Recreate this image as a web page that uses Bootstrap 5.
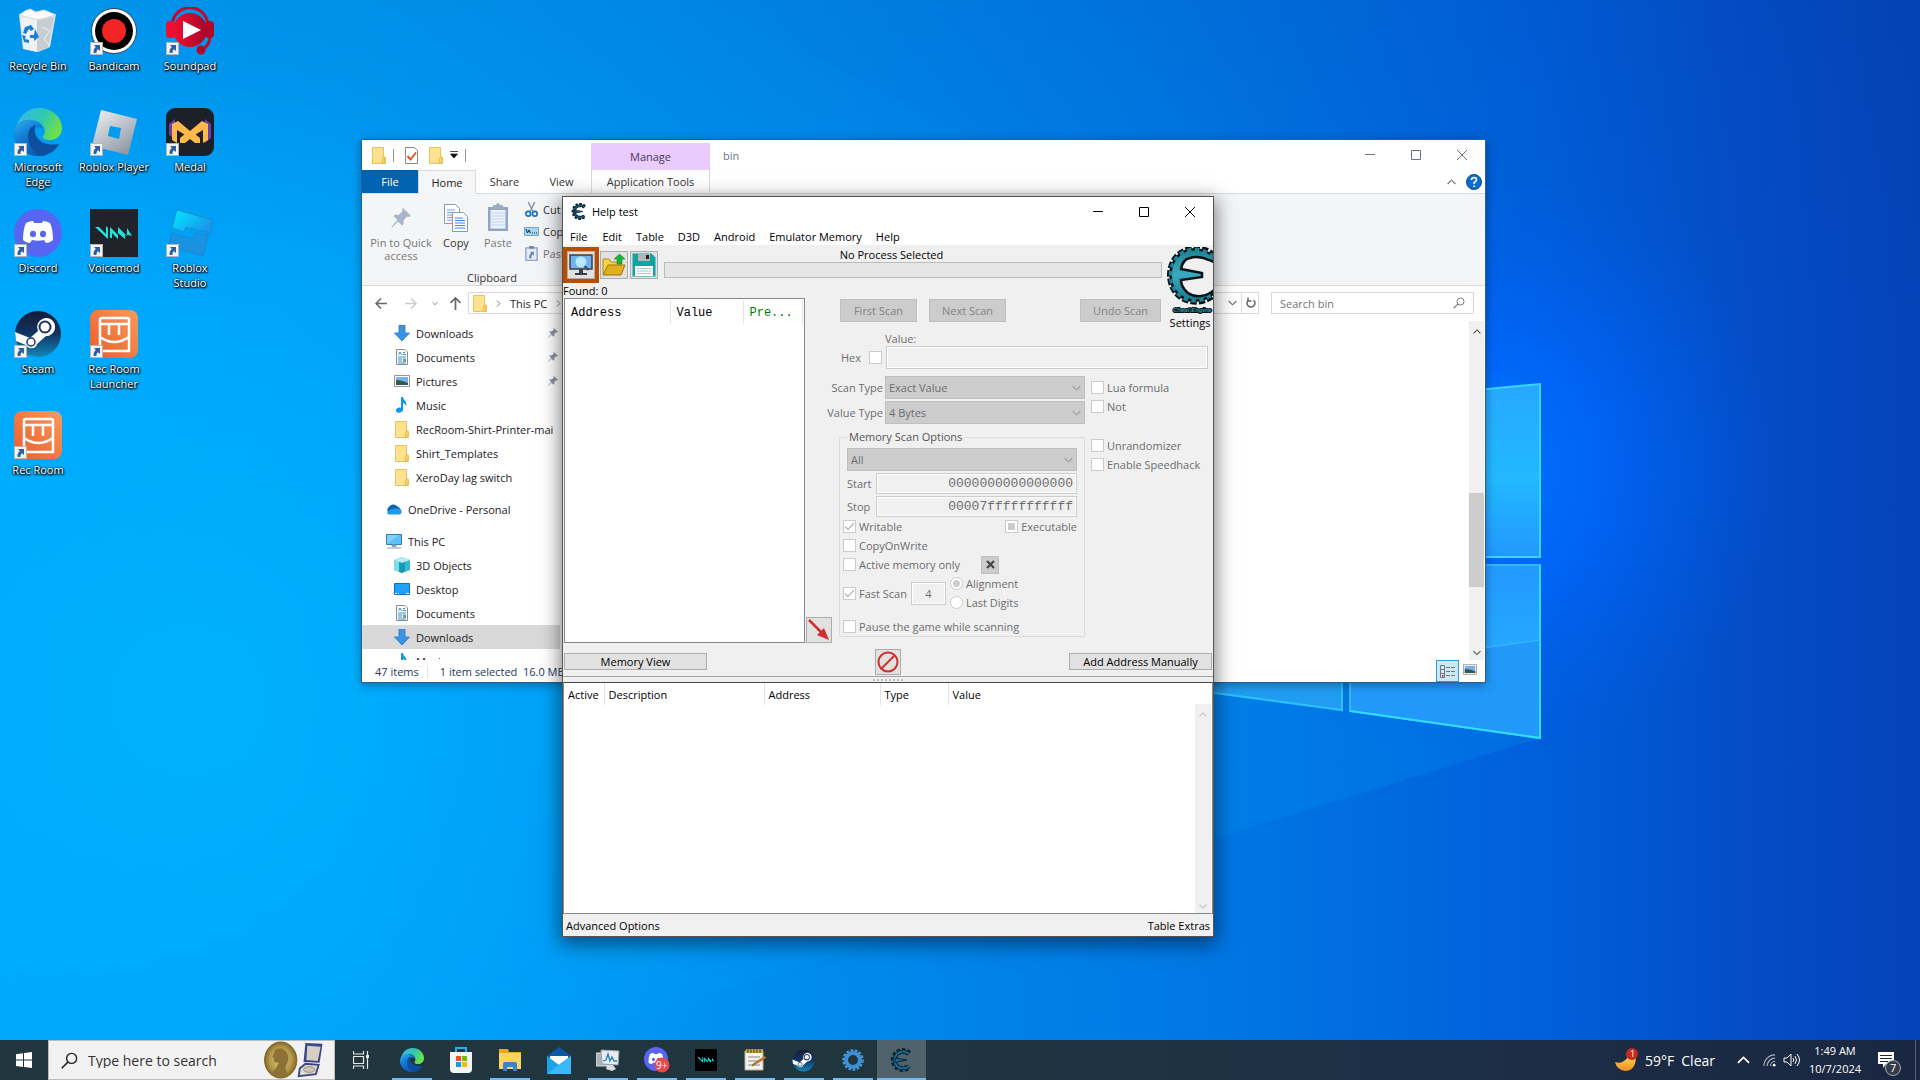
<!DOCTYPE html>
<html lang="en">
<head>
<meta charset="utf-8">
<meta name="viewport" content="width=device-width, initial-scale=1">
<title>Desktop</title>
<link rel="stylesheet" href="https://cdn.jsdelivr.net/npm/bootstrap@5.3.0/dist/css/bootstrap.min.css">
<style>
body{font-family:"Open Sans","Noto Sans",sans-serif;font-size:11px;line-height:15px;color:#000;background:#008ff0}
button,input,select{font:inherit;color:inherit;border-radius:0}
a{color:inherit;text-decoration:none}
svg{display:block;flex:none}
.desk{position:relative;flex:1 1 auto;min-height:0;overflow:hidden}
.wallpaper{position:absolute;inset:0;width:100%;height:100%}
/* desktop shortcuts */
.shortcuts{position:relative;display:inline-grid;grid-template-columns:repeat(3,76px);grid-auto-rows:101px;padding-top:7px}
.shortcut{display:flex;flex-direction:column;align-items:center;text-align:center;color:#fff;text-shadow:1px 1px 2px #000,0 1px 2px #000,0 0 2px #000}
.shortcut span{margin-top:3px;padding:0 2px}
.nolabel{white-space:nowrap}
.flip{transform:rotate(180deg)}
.turn{transform:rotate(-90deg)}
/* windows */
.win{position:absolute;background:#fff}
.explorer{left:361px;top:139px;width:1125px;height:544px;border:1px solid #2b5f8f;border-top-color:#0b66b4;box-shadow:0 2px 9px rgba(0,0,0,.35)}
.explorer>*{flex:none}
.explorer>.ex-body{flex:1 1 0;min-height:0}
.engine{left:562px;top:196px;width:652px;border:1px solid #555;box-shadow:0 5px 18px 2px rgba(0,0,0,.5)}
.capbtn{background:none;border:0;padding:0;width:46px;display:flex;align-items:center;justify-content:center}
/* explorer */
.ex-title{height:30px}
.quick{width:229px;gap:7px;padding-left:10px}
.ctx-tab{width:119px;margin-top:3px;background:#e9cbfd;color:#4a3b57;display:flex;align-items:center;justify-content:center}
.vbar{width:1px;height:13px;background:#999}
.ex-tabs{height:24px;border-bottom:1px solid #dadbdc}
.ex-tab{display:flex;align-items:center;justify-content:center;width:57px;color:#333}
.ex-file{width:56px;background:#0063b1;color:#fff}
.ex-home{width:58px;background:#f5f6f7;border:1px solid #dadbdc;border-bottom:0;margin-bottom:-1px;color:#222}
.ex-app{width:119px;margin-left:1px;border:solid #dadbdc;border-width:0 1px;color:#333}
.ribbon{height:92px;background:#f4f5f7;border-bottom:1px solid #dadbdc;color:#333}
.rib-btn{background:none;border:0;padding:0;display:flex;flex-direction:column;align-items:center;line-height:13px}
.rib-small{gap:7px;padding-top:8px}
.muted-t{color:#777}
.addr-row{height:35px;padding:6px 11px 7px 0}
.field-box{border:1px solid #d9d9d9;height:22px}
.nav-pane{width:198px;overflow:hidden;white-space:nowrap}
.nav-pane a{display:flex;align-items:center;height:24px;gap:6px;padding-left:32px;color:#1a1a1a}
.nav-pane a.lvl0{padding-left:24px}
.nav-pane a.sel{background:#d9d9d9}
.pinned svg:last-child{margin-left:auto;margin-right:2px}
.sbar{background:#f0f0f0;display:flex;flex-direction:column;align-items:center}
.status-ex{height:22px;color:#1e395b}
.view-on{background:#cce8f6;border:1px solid #26a0da;padding:0 3px}
/* engine */
.eng-title{height:30px;padding-bottom:1px}
.eng-menu{height:18px}
.eng-menu a{padding:0 0 0 7px;margin-right:7px}
.eng-menu a:first-child{margin-right:8px}
.eng-top{background:#f0f0f0;display:grid;grid-template-columns:269px 1fr 50px;grid-template-rows:38px 50px 312px 31px}
.tool{width:28px;height:28px;padding:0;border:1px solid #adadad;background:#e1e1e1;display:flex;align-items:center;justify-content:center}
.hot{outline:4px solid #b84c00}
.progress-box{height:16px;border:1px solid #bcbcbc;background:#e6e6e6}
.found-list{width:241px;height:345px;border:1px solid #828790;background:#fff;margin-left:1px}
.mono-h{font-family:"Liberation Mono",monospace;font-size:12px}
.mono-h th{font-weight:400;height:24px;padding:2px 6px 0;border-right:1px solid #e5e5e5}
.flat{border:1px solid #bfbfbf;background:#ccc;color:#838383;height:23px;padding:0}
.cmd{border:1px solid #adadad;background:#e1e1e1;width:143px;height:17px;padding:0;line-height:14px}
.dis{color:#6d6d6d}
.dis select{appearance:none;display:block;border:1px solid #bfbfbf;background:#ccc;height:23px;padding:0 3px;color:#6d6d6d;opacity:1;width:100%}
.pick{position:relative}
.pick svg{position:absolute;right:4px;top:9px;pointer-events:none}
.tbox{border:1px solid #ccc;box-shadow:inset 0 0 0 1px #fff;background:#f0f0f0;padding:0 4px;color:#6d6d6d}
.side-lab{width:51px;margin-right:2px;white-space:nowrap;display:flex;justify-content:flex-end}
.span-row{display:flex;align-items:center;height:21px;margin-top:2px}
.span-row label{width:29px}
.hexnum{font-family:"Liberation Mono",monospace;font-size:13px;height:21px;text-align:right;padding:0 3px;min-width:0}
.tick{appearance:none;flex:none;width:13px;height:13px;border:1px solid #ccc;background:#fff center/11px 11px no-repeat;margin:0}
.tick:checked{background-image:url("data:image/svg+xml,%3Csvg xmlns='http://www.w3.org/2000/svg' viewBox='0 0 11 11'%3E%3Cpath d='M1 5.5l3 3 6-6.5' fill='none' stroke='%23bbb' stroke-width='1.3'/%3E%3C/svg%3E")}
.tick.part{background-image:linear-gradient(#ccc,#ccc);background-size:7px 7px}
.dot{border-radius:50%}
.dot:checked{background-image:radial-gradient(circle,#ccc 0 3px,#fff 4px)}
.ln{display:flex;align-items:center;height:19px;gap:3px}
.group{margin:5px 0 0 7px;border:1px solid #dcdcdc;padding:3px 7px 0}
.group legend{float:none;width:auto;font-size:11px;line-height:16px;margin:0;padding:0 2px;height:16px;color:#555}
.splitter{height:6px;border-top:1px solid #a0a0a0;background:#f0f0f0;display:flex;align-items:center;justify-content:center}
.splitter i{width:30px;height:2px;background:repeating-linear-gradient(90deg,#bbb 0 2px,transparent 2px 4px)}
.cheat-list{height:232px;border:1px solid #828790;border-top-color:#444;background:#fff}
.cheat-list th{font-weight:400;height:22px;padding:0 0 0 4px;border-right:1px solid #e5e5e5}
.cheat-list th:last-child{border:0}
.eng-status{height:22px;background:#f0f0f0;padding:1px 3px 0}
/* taskbar */
.taskbar{height:40px;background:linear-gradient(90deg,#21353f,#20363f 45%,#1d3045 70%,#1a2742);color:#fff;flex:none;display:flex}
.start{width:48px;background:none;border:0;padding:0;display:flex;align-items:center;justify-content:center}
.findbox{width:287px;background:#f2f2f2;border:1px solid #bbb;color:#333}
.findbox input{border:0;background:none;width:140px;font-size:14px;padding:0;outline:0}
.findbox input::placeholder{color:#333;opacity:1}
.tb{width:49px;display:flex;align-items:center;justify-content:center;background:none;border:0;padding:0}
.run{background:linear-gradient(#76b9ed,#76b9ed) center bottom/40px 2px no-repeat}
.act{background:linear-gradient(#76b9ed,#76b9ed) center bottom/49px 2px no-repeat,#50636c}
.tray{font-size:14px}
.clock{font-size:11px;line-height:18px;width:64px;text-align:center}
</style>
<script src="https://cdn.jsdelivr.net/npm/bootstrap@5.3.0/dist/js/bootstrap.bundle.min.js"></script>
</head>
<body class="vh-100 d-flex flex-column overflow-hidden">

<svg width="0" height="0" class="position-absolute" aria-hidden="true">
<defs>
<linearGradient id="gEdgeA" x1="0" y1="0" x2="1" y2=".4"><stop offset="0" stop-color="#37b6f0"/><stop offset=".6" stop-color="#2fc8b0"/><stop offset="1" stop-color="#6be04c"/></linearGradient>
<linearGradient id="gEdgeB" x1="0" y1="0" x2=".6" y2="1"><stop offset="0" stop-color="#2fb0ee"/><stop offset=".5" stop-color="#0f78d4"/><stop offset="1" stop-color="#0a5cb0"/></linearGradient>
<linearGradient id="gRed" x1="0" y1="0" x2="1" y2="0"><stop offset="0" stop-color="#f01030"/><stop offset="1" stop-color="#a8062a"/></linearGradient>
<linearGradient id="gSilver" x1="0" y1="0" x2=".7" y2="1"><stop offset="0" stop-color="#f4f4f4"/><stop offset="1" stop-color="#8e99a6"/></linearGradient>
<linearGradient id="gRec" x1="1" y1="0" x2="0" y2="1"><stop offset="0" stop-color="#f79b5c"/><stop offset="1" stop-color="#ea5c2b"/></linearGradient>
<linearGradient id="gSteam" x1="0" y1="0" x2="0" y2="1"><stop offset="0" stop-color="#141a38"/><stop offset=".5" stop-color="#123564"/><stop offset="1" stop-color="#1287b8"/></linearGradient>
<linearGradient id="gStudio" x1="0" y1="0" x2="1" y2=".6"><stop offset="0" stop-color="#00eaff"/><stop offset="1" stop-color="#1a96ea"/></linearGradient>
<linearGradient id="gTeal" x1="0" y1="0" x2="0" y2="1"><stop offset="0" stop-color="#1f8496"/><stop offset=".5" stop-color="#3aaabe"/><stop offset="1" stop-color="#1b7a90"/></linearGradient>
<linearGradient id="gMoon" x1="0" y1="0" x2="0" y2="1"><stop offset="0" stop-color="#ffd34d"/><stop offset="1" stop-color="#f08a24"/></linearGradient>
<radialGradient id="gGold"><stop offset="0" stop-color="#e0c878"/><stop offset=".7" stop-color="#b3974a"/><stop offset="1" stop-color="#80672a"/></radialGradient>
<symbol id="arrowov" viewBox="0 0 13 13"><rect x=".5" y=".5" width="12" height="12" fill="#f4f4f4" stroke="#b5b5b5"/><path d="M4 3h6v6L8 7.200C6.800 8 6.300 9.500 6.500 11H3.800C3 8.700 4 6.800 5.800 5Z" fill="#2e5fa3"/></symbol>
<symbol id="edge" viewBox="0 0 48 48"><path d="M2 20C5 7 14 0 25 0c14 0 23 10 23 20 0 8-6 12-12 12-4 0-8-1-7-4 3-3 2-7 0-10C24 10 10 10 2 20Z" fill="url(#gEdgeA)"/><path d="M0 26C0 14 10 11 17 12c6 1 11 5 12 9-5-4-11-1-12 6-1 8 5 17 15 20-3 1-6 1-8 1C11 48 0 38 0 26Z" fill="url(#gEdgeB)"/><path d="M14 28c0-6 3-10 8-11-3 5-1 13 6 17 6 3 12 3 17 2-3 6-10 11-17 12C19 46 14 36 14 28Z" fill="#0d4f9e"/></symbol>
<symbol id="discord" viewBox="0 0 48 48"><circle cx="24" cy="24" r="24" fill="#5865f2"/><path d="M19 12c-3 0-5 1-7 2-2 4-3 10-3 17 2 2 5 3 7 3l2-3c4 1 8 1 12 0l2 3c2 0 5-1 7-3 0-7-1-13-3-17-2-1-4-2-7-2l-1 2h-8Z" fill="#fff"/><ellipse cx="19" cy="25" rx="3" ry="3.300" fill="#5865f2"/><ellipse cx="29" cy="25" rx="3" ry="3.300" fill="#5865f2"/></symbol>
<symbol id="vm" viewBox="0 0 48 48"><path d="M5 18h4l7 7V17l2 2v11ZM20 18l8 8v-8l9 9v-8l5 8-7-2v5l-7-6v6l-6-6v5h-2Z" fill="#1fe5dc"/></symbol>
<symbol id="steam" viewBox="0 0 48 48"><circle cx="24" cy="24" r="23" fill="url(#gSteam)"/><path d="M1 22l15 6 8-7a9 9 0 1 1 8 5l-9 8c-1 5-8 6-11 1L2 31Z" fill="#fff"/><circle cx="31" cy="17" r="6.500" fill="#1a3460"/><circle cx="31" cy="17" r="4.500" fill="#fff"/><circle cx="17" cy="32" r="4" fill="none" stroke="#1a3460" stroke-width="1.500"/></symbol>
<symbol id="rec" viewBox="0 0 48 48"><rect width="48" height="48" rx="8" fill="url(#gRec)"/><g fill="none" stroke="#fff" stroke-width="2.500"><path d="M12 8h25q2 0 2 2v4H10v-4q0-2 2-2ZM10 14v27h29V14M19 15v10M29 15v10M10 27q14 10 29 0"/></g></symbol>
<symbol id="folder" viewBox="0 0 14 17"><path d="M.5.500h11V10h1.800v6.500H.5Z" fill="#ffe290" stroke="#e9c35a"/><path d="M10.500 16V11q1-1.500 2.500 0v5.500Z" fill="#ffd766" stroke="#dcae3e" stroke-width=".7"/></symbol>
<symbol id="down" viewBox="0 0 16 16"><path d="M5 0h6v8h4.500L8 16 .5 8H5Z" fill="#3a94e4" stroke="#2676c6" stroke-width=".8"/></symbol>
<symbol id="doc" viewBox="0 0 16 16"><path d="M2.500.500H11L13.500 3v12.500h-11Z" fill="#fff" stroke="#8d8d8d"/><path d="M4.500 6l1.500-3 1.500 3M9 3.500h2M9 5.500h3M4 8h8M4 10h4M4 12h4M4 14h8" stroke="#3a8ed0" fill="none"/><path d="M9 9.500h3V13H9Z" fill="#69a59a"/></symbol>
<symbol id="pic" viewBox="0 0 16 12"><path d="M.5.500h15v11H.5Z" fill="#fff" stroke="#969696"/><path d="M2 2h12v8H2Z" fill="#76b2ea"/><path d="M2 5q5 0 12 3v2H2Z" fill="#35584f"/></symbol>
<symbol id="note" viewBox="0 0 16 16"><path d="M7 0h2c0 3 4 4 3.500 9-1-2-2-2.500-3.500-3v7c-.5 3-7 4-7 .500C2 11 5 10 7 11Z" fill="#0f95ee"/></symbol>
<symbol id="cloud" viewBox="0 0 16 12"><path d="M3 10A3.500 3.500 0 0 1 3 4 5 5 0 0 1 11 3Q15 5 15.500 9Z" fill="#0a64b8"/><path d="M1 10q2-4 6-4 4-2 8 1 1.500 4-1.500 4.500H3Q1.500 11 1 10Z" fill="#2199e8"/></symbol>
<symbol id="pc" viewBox="0 0 16 15"><path d="M.5.500h15v10H.5Z" fill="#5cc0fa" stroke="#2d7fb8"/><path d="M1 10V1h12Z" fill="#9adcff" opacity=".6"/><path d="M6 11h4v1.500H6ZM1 14h14" fill="#9ab" stroke="#8c9aa6"/></symbol>
<symbol id="cube" viewBox="0 0 16 16"><path d="M8 0l8 3v10l-8 3-8-3V3Z" fill="#35b8cf"/><path d="M0 3l8 3v10l-8-3Z" fill="#7fdce8"/><path d="M8 0l8 3-8 3-8-3Z" fill="#b4eef4"/><path d="M5 5l3 1 3-1v9l-3 2-3-1Z" fill="#159ab8"/></symbol>
<symbol id="dtop" viewBox="0 0 16 12"><path d="M.5.500h15v11H.5Z" fill="#1fa0ff" stroke="#0a6fc8"/><path d="M1 10.500h2M4 10.500h1M12 10.500h3" stroke="#fff"/></symbol>
<symbol id="pin" viewBox="0 0 20 20"><path d="M12 0l8 8-2 1-2-.500-3.500 4 .2 3.500-1.700 1.500-4-4L1 19.500.3 19l6-7L2.500 8 4 6.500l3.500.500 4-3.500-.500-2Z" fill="currentColor"/></symbol>
<symbol id="ce" viewBox="0 0 24 24"><path d="M19 5.500A9 9 0 1 0 19 18.500" fill="none" stroke="#0c2430" stroke-width="6" stroke-dasharray="3 1.600"/><path d="M19 6A8.500 8.500 0 1 0 19 18" fill="none" stroke="#0c2430" stroke-width="3.600"/><path d="M19 6A8.500 8.500 0 1 0 19 18" fill="none" stroke="currentColor" stroke-width="2"/><path d="M5 10l12 2-12 2.500Z" fill="currentColor" stroke="#0c2430" stroke-width="1"/></symbol>
<symbol id="chev" viewBox="0 0 10 6"><path d="M.7.800L5 5 9.300.800" fill="none" stroke="currentColor" stroke-width="1.300"/></symbol>
<symbol id="lens" viewBox="0 0 16 16"><circle cx="10" cy="6" r="4.700" fill="none" stroke="currentColor" stroke-width="1.300"/><path d="M6.700 9.300L.7 15.300" stroke="currentColor" stroke-width="1.500"/></symbol>
<symbol id="close" viewBox="0 0 10 10"><path d="M0 0l10 10M10 0L0 10" stroke="currentColor"/></symbol>
<symbol id="maxi" viewBox="0 0 10 10"><path d="M.5.500h9v9h-9Z" fill="none" stroke="currentColor"/></symbol>
<symbol id="mini" viewBox="0 0 10 10"><path d="M0 4.500h10" stroke="currentColor"/></symbol>
</defs>
</svg>

<main class="desk">
<svg class="wallpaper" viewBox="0 0 1920 1040" preserveAspectRatio="none" aria-hidden="true">
<defs>
<linearGradient id="wBase" x1="0" y1="0" x2="1" y2="0"><stop offset="0" stop-color="#00a6fb"/><stop offset=".2" stop-color="#009ef6"/><stop offset=".4" stop-color="#008eed"/><stop offset=".62" stop-color="#0078e4"/><stop offset=".8" stop-color="#0060dc"/><stop offset=".9" stop-color="#044ec8"/><stop offset="1" stop-color="#0542b8"/></linearGradient>
<linearGradient id="wTop" x1="0" y1="0" x2="0" y2="1"><stop offset="0" stop-color="#003fa0" stop-opacity=".16"/><stop offset=".3" stop-color="#003fa0" stop-opacity="0"/></linearGradient>
<radialGradient id="wLeft" gradientUnits="userSpaceOnUse" cx="200" cy="700" r="620"><stop offset="0" stop-color="#00b4ff" stop-opacity=".9"/><stop offset="1" stop-color="#00b0ff" stop-opacity="0"/></radialGradient>
<radialGradient id="wGlow" gradientUnits="userSpaceOnUse" cx="1480" cy="470" r="300"><stop offset="0" stop-color="#0074ff"/><stop offset=".4" stop-color="#0066ff" stop-opacity=".75"/><stop offset="1" stop-color="#0058e8" stop-opacity="0"/></radialGradient>
<linearGradient id="wBeam" gradientUnits="userSpaceOnUse" x1="1540" y1="0" x2="300" y2="0"><stop offset="0" stop-color="#0088ec" stop-opacity=".3"/><stop offset=".5" stop-color="#0096f4" stop-opacity=".3"/><stop offset="1" stop-color="#00a0ff" stop-opacity=".05"/></linearGradient>
<linearGradient id="wPane" x1="0" y1="0" x2="0" y2="1"><stop offset="0" stop-color="#27a8ff"/><stop offset=".55" stop-color="#22b8ff"/><stop offset="1" stop-color="#2298ff"/></linearGradient>
<linearGradient id="wPane2" x1="0" y1="0" x2="0" y2="1"><stop offset="0" stop-color="#2298ff"/><stop offset="1" stop-color="#26acff"/></linearGradient>
</defs>
<rect width="1920" height="1040" fill="url(#wBase)"/>
<rect width="1920" height="1040" fill="url(#wTop)"/>
<rect width="1920" height="1040" fill="url(#wLeft)"/>
<rect width="1920" height="1040" fill="url(#wGlow)"/>
<path d="M1540 738L560 1040H0V560L1100 560Z" fill="url(#wBeam)"/>
<path d="M1540 384L1350 330 700 0H320L1000 500Z" fill="url(#wBeam)" opacity=".3"/>
<path d="M1200 412L1540 384V557H1200Z" fill="url(#wPane)"/>
<path d="M1350 565H1540V738L1350 711Z" fill="#2298f8"/>
<path d="M1350 565H1540V640L1350 667Z" fill="url(#wPane2)"/>
<path d="M1100 565H1342V710L1100 679Z" fill="#209cf2"/>
<path d="M1350 667L1540 640" stroke="#3cc4ff" stroke-opacity=".8"/>
<path d="M1200 417L1540 384V557H1200" fill="none" stroke="#37d6ff" stroke-width="2"/>
<path d="M1350 565V711L1540 738V565Z" fill="none" stroke="#30b8ff" stroke-width="2"/>
<path d="M1350 711L1540 738V565" fill="none" stroke="#30dcff" stroke-width="2"/>
<path d="M1342 683V710L1200 691" fill="none" stroke="#2cc0ff" stroke-width="2"/>
<path d="M1343 565H1349V711L1343 710Z" fill="#0078de"/>
</svg>

<div class="shortcuts">
<a class="shortcut" href="#"><svg width="48" height="48" viewBox="0 0 48 48"><path d="M5 8l37-1-6 33-12 5-15-3Z" fill="#dfe6ea"/><path d="M7 10l16 3v32L10 42Z" fill="#eef2f4"/><path d="M23 13l17-3-6 31-11 4Z" fill="#c6ced4"/><path d="M10 14l6 8-4 10 8 8M28 20l8 4-6 8 5 6" fill="none" stroke="#fff" stroke-opacity=".7"/><path d="M5 8L11 4 16 2 22 5 30 3 35 5 42 8 24 13Z" fill="#fafafa" stroke="#d4d8da"/><path d="M11 20l6-2 3 4-3 2-2-2-3 5-3-1ZM21 22l4 8-5 4v-3h-4v-3h4ZM8 28l4 1-1 3 4 1v3l-5-1Z" fill="#1a7fd6"/></svg><span>Recycle Bin</span></a>
<a class="shortcut" href="#"><svg width="48" height="48" viewBox="0 0 48 48"><circle cx="24" cy="24" r="22.500" fill="#fff" stroke="#345"/><circle cx="24" cy="24" r="19" fill="#000"/><circle cx="24" cy="24" r="12" fill="#f32424"/><use href="#arrowov" y="35" width="13" height="13"/></svg><span>Bandicam</span></a>
<a class="shortcut" href="#"><svg width="48" height="48" viewBox="0 0 48 48"><path d="M6 18C8 -5 40 -5 42 18M44 29q0 9-8 14" fill="none" stroke="#c00a2c" stroke-width="3"/><circle cx="24" cy="23" r="17" fill="url(#gRed)"/><rect y="14" width="9" height="17" rx="4" fill="#ee0f30"/><rect x="39" y="14" width="9" height="17" rx="4" fill="#b0072b"/><circle cx="35" cy="43" r="4.500" fill="#b0072b"/><path d="M17 14l18 9-18 9Z" fill="#fff"/><use href="#arrowov" y="35" width="13" height="13"/></svg><span>Soundpad</span></a>
<a class="shortcut" href="#"><svg width="48" height="48" viewBox="0 0 48 48"><use href="#edge"/><use href="#arrowov" y="35" width="13" height="13"/></svg><span>Microsoft Edge</span></a>
<a class="shortcut" href="#"><svg width="48" height="48" viewBox="0 0 48 48"><path d="M11 2l36 9-9 36L2 38ZM20 18l-2 10 11 3 2-11Z" fill="url(#gSilver)" fill-rule="evenodd"/><use href="#arrowov" y="35" width="13" height="13"/></svg><span class="nolabel">Roblox Player</span></a>
<a class="shortcut" href="#"><svg width="48" height="48" viewBox="0 0 48 48"><rect width="48" height="48" rx="9" fill="#1c2029"/><path d="M3 16l6-5v20l-6-4ZM45 16l-6-5v24l6-5Z" fill="#6b3fa8"/><path d="M6 16l6-3 12 10 12-10 6 3v16l-5 3V22l-5 3-8 5-8-5-5-3v13l-5-3ZM14 35v-5l5-4 5 4 5-4 5 4v5h-5l-5-4-5 4Z" fill="#ffb84a"/><use href="#arrowov" y="35" width="13" height="13"/></svg><span>Medal</span></a>
<a class="shortcut" href="#"><svg width="48" height="48" viewBox="0 0 48 48"><use href="#discord"/><use href="#arrowov" y="35" width="13" height="13"/></svg><span>Discord</span></a>
<a class="shortcut" href="#"><svg width="48" height="48" viewBox="0 0 48 48"><path fill="#20242a" d="M0 0h48v48H0Z"/><use href="#vm"/><use href="#arrowov" y="35" width="13" height="13"/></svg><span>Voicemod</span></a>
<a class="shortcut" href="#"><svg width="48" height="48" viewBox="0 0 48 48"><path d="M11 1l36 10-3 13-24-6-2 5-12-4Z" fill="url(#gStudio)" stroke="#2a7cc0" stroke-width=".7"/><path d="M6 24l21 6 2-6 13 2-5 21-35-10Z" fill="#1a92e2" stroke="#2a7cc0" stroke-width=".7"/><use href="#arrowov" y="35" width="13" height="13"/></svg><span>Roblox<br>Studio</span></a>
<a class="shortcut" href="#"><svg width="48" height="48" viewBox="0 0 48 48"><use href="#steam"/><use href="#arrowov" y="35" width="13" height="13"/></svg><span>Steam</span></a>
<a class="shortcut" href="#"><svg width="48" height="48" viewBox="0 0 48 48"><use href="#rec"/><use href="#arrowov" y="35" width="13" height="13"/></svg><span>Rec Room Launcher</span></a>
<i></i>
<a class="shortcut" href="#"><svg width="48" height="48" viewBox="0 0 48 48"><use href="#rec"/><use href="#arrowov" y="35" width="13" height="13"/></svg><span>Rec Room</span></a>
</div>

<section class="win explorer d-flex flex-column" aria-label="bin">
<header class="ex-title d-flex">
 <div class="quick d-flex align-items-center">
  <svg width="14" height="17"><use href="#folder"/></svg><i class="vbar"></i>
  <svg class="ms-1" width="13" height="17" viewBox="0 0 13 17"><path d="M.5.500h9l3 3v13H.5Z" fill="#fff" stroke="#8a8a8a"/><path d="M2.500 9l3 3.500L11 5.500" fill="none" stroke="#e8562a" stroke-width="2"/></svg>
  <svg class="ms-1" width="14" height="17"><use href="#folder"/></svg>
  <svg width="8" height="8" viewBox="0 0 8 8"><path d="M0 .500h8M.5 3h7L4 7Z" stroke="#222" stroke-width=".8"/></svg><i class="vbar"></i>
 </div>
 <div class="ctx-tab">Manage</div>
 <div class="d-flex align-items-center text-secondary" style="padding-left:13px">bin</div>
 <div class="ms-auto d-flex text-secondary">
  <button class="capbtn" aria-label="Minimize"><svg width="10" height="10"><use href="#mini"/></svg></button>
  <button class="capbtn" aria-label="Maximize"><svg width="10" height="10"><use href="#maxi"/></svg></button>
  <button class="capbtn" aria-label="Close"><svg width="10" height="10"><use href="#close"/></svg></button>
 </div>
</header>
<nav class="ex-tabs d-flex">
 <a class="ex-tab ex-file" href="#">File</a><a class="ex-tab ex-home" href="#">Home</a><a class="ex-tab" href="#">Share</a><a class="ex-tab" href="#">View</a><a class="ex-tab ex-app" href="#">Application Tools</a>
 <div class="ms-auto d-flex align-items-center text-secondary" style="gap:10px;padding-right:3px"><svg class="flip" width="9" height="6"><use href="#chev"/></svg>
 <svg width="16" height="16" viewBox="0 0 16 16"><circle cx="8" cy="8" r="7.500" fill="#0a6cd0" stroke="#0a4a94"/><path d="M5.500 6q0-2.500 2.500-2.500T10.500 6Q10.500 7 8.200 8.500V10M8.200 11.500V13" fill="none" stroke="#fff" stroke-width="1.700"/></svg></div>
</nav>
<div class="ribbon d-flex">
 <div class="d-flex flex-column" style="width:260px">
  <div class="d-flex align-items-start flex-grow-1">
   <button class="rib-btn muted-t" style="width:78px;padding-top:14px"><svg class="mb-2" width="20" height="20" color="#a9b6c9"><use href="#pin"/></svg><span>Pin to Quick access</span></button>
   <button class="rib-btn" style="width:32px;padding-top:10px"><svg class="mb-1" width="25" height="28" viewBox="0 0 25 28"><path d="M.5.500h11l4 4v15H.5Z" fill="#fff" stroke="#8f9aa6"/><path d="M3 6h8M3 8.500h10M3 11h10M3 13.500h10M3 16h10" stroke="#6aa0dc"/><path d="M8.500 8.500h11l4 4v15h-15Z" fill="#fff" stroke="#8f9aa6"/><path d="M11 14h8M11 16.500h10M11 19h10M11 21.500h10M11 24h10" stroke="#3f86d8"/></svg><span>Copy</span></button>
   <button class="rib-btn muted-t" style="width:52px;padding-top:9px"><svg class="mb-1" width="22" height="29" viewBox="0 0 22 29"><path d="M1 4h20v24H1Z" fill="#8ea5c6"/><path d="M3.500 7h15v18.500h-15Z" fill="#eef4fc"/><path d="M6 2h3q2-4 4 0h3v4H6Z" fill="#a0acba"/><path d="M4 10h14M4 13h14M4 16h14M4 19h14M4 22h14" stroke="#bfd2ea"/></svg><span>Paste</span></button>
   <div class="rib-small d-flex flex-column text-nowrap">
    <span class="d-flex gap-1"><svg width="15" height="15" viewBox="0 0 15 16"><path d="M4 0l5 10M11 0L6 10" stroke="#8a94a0" stroke-width="1.500"/><circle cx="4" cy="12.500" r="2.500" fill="none" stroke="#1673c0" stroke-width="1.800"/><circle cx="11" cy="12.500" r="2.500" fill="none" stroke="#1673c0" stroke-width="1.800"/></svg>Cut</span>
    <span class="d-flex gap-1 align-items-center"><svg width="15" height="9" viewBox="0 0 15 9"><path d="M.5.500h14v8H.5Z" fill="#a6d8f4" stroke="#6aa8d0"/><path d="M2 2l1.500 4L5 3l1.500 3M8 6h1M10 6h1M12 6h1" fill="none" stroke="#123"/></svg>Copy path</span>
    <span class="d-flex gap-1 muted-t"><svg width="15" height="15" viewBox="0 0 15 16"><path d="M1.500 2h12v13.500h-12Z" fill="#e4ebf5" stroke="#8ea5c6" stroke-width="1.500"/><path d="M5 0h5v3H5ZM6 6h4v4L8.500 9q-1.500 2-1 4H5q-.500-3 2-5.500Z" fill="#6a86ae"/></svg>Paste shortcut</span>
   </div>
  </div>
  <div class="text-center">Clipboard</div>
 </div>
</div>
<div class="addr-row d-flex align-items-center text-secondary">
 <div class="d-flex align-items-center" style="width:106px;gap:18px;padding-left:13px">
  <svg width="12" height="11" viewBox="0 0 12 11"><path d="M6 .500l-5 5 5 5M1 5.500h11" fill="none" stroke="#666" stroke-width="1.500"/></svg>
  <svg width="12" height="11" viewBox="0 0 12 11"><path d="M6 .500l5 5-5 5M11 5.500H0" fill="none" stroke="#ccc" stroke-width="1.500"/></svg>
  <div class="d-flex align-items-center" style="gap:12px;margin-left:-3px"><svg width="6" height="5"><use href="#chev"/></svg>
  <svg width="11" height="13" viewBox="0 0 11 13"><path d="M.5 6l5-5 5 5M5.500 1v12" fill="none" stroke="#666" stroke-width="1.700"/></svg></div>
 </div>
 <div class="field-box flex-grow-1 d-flex align-items-center ps-1">
  <svg width="14" height="17"><use href="#folder"/></svg><svg class="turn mx-2" width="7" height="5"><use href="#chev"/></svg><span class="text-dark">This PC</span><svg class="turn mx-2" width="7" height="5"><use href="#chev"/></svg>
  <svg class="ms-auto me-1" width="9" height="6"><use href="#chev"/></svg>
  <div class="h-100 border-start d-flex align-items-center px-1" style="width:17px"><svg width="10" height="12" viewBox="0 0 10 12"><path d="M2.500 3A4 4 0 1 0 7.500 3M2 .5v3.500h3.500" fill="none" stroke="#666" stroke-width="1.500"/></svg></div>
 </div>
 <div class="field-box d-flex align-items-center" style="width:203px;padding:0 8px;margin-left:12px"><input class="border-0 p-0 flex-grow-1" style="min-width:0" placeholder="Search bin" aria-label="Search bin"><svg width="12" height="12"><use href="#lens"/></svg></div>
</div>
<div class="ex-body d-flex">
 <nav class="nav-pane">
  <a class="pinned" href="#"><svg width="16" height="16"><use href="#down"/></svg>Downloads<svg width="10" height="10" color="#8a949e"><use href="#pin"/></svg></a>
  <a class="pinned" href="#"><svg width="16" height="16"><use href="#doc"/></svg>Documents<svg width="10" height="10" color="#8a949e"><use href="#pin"/></svg></a>
  <a class="pinned" href="#"><svg width="16" height="12"><use href="#pic"/></svg>Pictures<svg width="10" height="10" color="#8a949e"><use href="#pin"/></svg></a>
  <a href="#"><svg width="16" height="16"><use href="#note"/></svg>Music</a>
  <a href="#"><svg width="16" height="17"><use href="#folder"/></svg>RecRoom-Shirt-Printer-mai</a>
  <a href="#"><svg width="16" height="17"><use href="#folder"/></svg>Shirt_Templates</a>
  <a href="#"><svg width="16" height="17"><use href="#folder"/></svg>XeroDay lag switch</a>
  <a class="lvl0 my-2" href="#"><svg width="16" height="12"><use href="#cloud"/></svg>OneDrive - Personal</a>
  <a class="lvl0" href="#"><svg width="16" height="15"><use href="#pc"/></svg>This PC</a>
  <a href="#"><svg width="16" height="16"><use href="#cube"/></svg>3D Objects</a>
  <a href="#"><svg width="16" height="12"><use href="#dtop"/></svg>Desktop</a>
  <a href="#"><svg width="16" height="16"><use href="#doc"/></svg>Documents</a>
  <a class="sel" href="#"><svg width="16" height="16"><use href="#down"/></svg>Downloads</a>
  <a href="#"><svg width="16" height="16"><use href="#note"/></svg>Music</a>
 </nav>
 <div class="sbar ms-auto" style="width:15px;margin-right:1px"><svg class="mt-2 flip" width="8" height="5" color="#505050"><use href="#chev"/></svg><i style="margin-top:159px;height:94px;width:15px;background:#cdcdcd"></i><svg class="mt-auto mb-1" width="8" height="6" color="#505050"><use href="#chev"/></svg></div>
</div>
<footer class="status-ex d-flex align-items-center">
 <span style="padding-left:13px">47 items</span><i class="vbar mx-2 opacity-25"></i><span class="ms-1">1 item selected&nbsp; 16.0 MB</span>
 <div class="ms-auto d-flex align-items-center h-100 gap-1 pe-2"><span class="view-on h-100 d-flex align-items-center"><svg width="15" height="13" viewBox="0 0 15 13"><path d="M.5.500h4v12h-4ZM.5 4.500h4M.5 8.500h4M6 2.500h4M11 2.500h4M6 6.500h4M11 6.500h4M6 10.500h4M11 10.500h4" fill="none" stroke="#777"/><path d="M2 10h1.500v1.500H2Z" fill="#c00"/></svg></span><svg class="mb-1" width="14" height="11"><use href="#pic"/></svg></div>
</footer>
</section>

<section class="win engine" aria-label="Help test">
<header class="eng-title d-flex align-items-center">
 <svg class="ms-2 me-1" width="17" height="17" color="#1f5672"><use href="#ce"/></svg><span>Help test</span>
 <div class="ms-auto d-flex h-100">
  <button class="capbtn" aria-label="Minimize"><svg width="10" height="10"><use href="#mini"/></svg></button>
  <button class="capbtn" aria-label="Maximize"><svg width="10" height="10"><use href="#maxi"/></svg></button>
  <button class="capbtn" aria-label="Close"><svg width="10" height="10"><use href="#close"/></svg></button>
 </div>
</header>
<nav class="eng-menu d-flex align-items-center"><a href="#">File</a><a href="#">Edit</a><a href="#">Table</a><a href="#">D3D</a><a href="#">Android</a><a href="#">Emulator Memory</a><a href="#">Help</a></nav>
<div class="eng-top">
 <div class="d-flex" style="grid-column:1/3;padding:6px 1px 4px 4px">
  <button class="tool hot" aria-label="Open process"><svg width="24" height="22" viewBox="0 0 24 22"><path d="M1 1h22v14H1Z" fill="#6fb2f0" stroke="#3a3f46" stroke-width="1.500"/><path d="M10 15h4v4h4v2H6v-2h4Z" fill="#3a3f46"/><circle cx="12" cy="8" r="5.500" fill="#b8e8ff"/><path d="M15.500 12l4 4" stroke="#445" stroke-width="2"/></svg></button>
  <button class="tool" style="margin-left:5px" aria-label="Load"><svg width="24" height="22" viewBox="0 0 24 22"><path d="M1 20V5h6l2 3h9v4" fill="#f4d24c" stroke="#b08a18"/><path d="M1 21l5-10h17l-4 10Z" fill="#e0b020" stroke="#9a7510"/><path d="M15 10V5h-3l5.500-5L23 5h-3v5Z" fill="#18b43a" stroke="#0a7a22" stroke-width=".5"/></svg></button>
  <button class="tool" style="margin-left:2px" aria-label="Save"><svg width="24" height="24" viewBox="0 0 24 24"><path d="M.5.500h19l4 4v19H.5Z" fill="#0fa3a3"/><path d="M6 1h12v7H6Z" fill="#b5b5b5"/><path d="M14 2h3v4h-3Z" fill="#222"/><path d="M3 13h18v10H3Z" fill="#fff"/><path d="M5 15.500h14M5 18h14M5 20.500h14" stroke="#9cc"/></svg></button>
  <div class="flex-grow-1 d-flex flex-column text-center" style="margin:-4px 0 0 6px"><span style="height:15px;padding-right:43px">No Process Selected</span><div class="progress-box" role="progressbar" aria-label="Scan progress"></div></div>
 </div>
 <div class="d-flex flex-column align-items-center" style="grid-area:1/3/3/4;padding:2px 0 0 4px">
  <svg width="46" height="68" viewBox="0 0 46 68"><path d="M47 9C36 -1 20 0 11 9C1 19 1 37 11 47C20 56 36 57 47 47" fill="none" stroke="#061216" stroke-width="7" stroke-dasharray="6 2"/><path d="M47 10C36 0 20 0 11 9C1 19 1 37 11 47C20 56 36 56 47 46L47 43C40 50 28 51 21 46C16 42 14 38 14 33L35 30V26L14 22C15 16 18 12 23 11C31 8 40 12 47 15Z" fill="url(#gTeal)" stroke="#061216" stroke-width="2.500"/><path d="M47 10C36 0 20 0 11 9C1 19 1 37 11 47C20 56 36 56 47 46" fill="none" stroke="#1f8496" stroke-width="3.500" stroke-dasharray="4.500 3.500" stroke-dashoffset="-.5"/><text x="6" y="65" font-size="6" font-weight="700" font-style="italic" font-family="Liberation Sans, sans-serif" fill="#2a9db4" stroke="#061216" stroke-width="2" paint-order="stroke">Cheat Engine</text></svg>
  <span>Settings</span>
 </div>
 <div style="grid-area:2/1/4/2"><div style="height:15px;line-height:16px">Found: 0</div>
  <div class="d-flex align-items-end"><div class="found-list"><table class="mono-h" style="width:238px;table-layout:fixed;margin-top:1px"><thead><tr><th style="width:105px">Address</th><th style="width:73px">Value</th><th style="color:#008000">Pre...</th></tr></thead></table></div>
  <button class="tool" style="width:26px;height:26px;margin-left:1px" aria-label="Copy to list"><svg width="22" height="22" viewBox="0 0 22 22"><path d="M1 1l12 12" stroke="#d03030" stroke-width="2.500"/><path d="M21 21l-12-5 7-7Z" fill="#d03030"/></svg></button></div>
 </div>
 <div class="d-flex align-items-start" style="grid-column:2;padding:16px 2px 0 8px;gap:12px"><button class="flat" style="width:77px" disabled>First Scan</button><button class="flat" style="width:77px" disabled>Next Scan</button><button class="flat ms-auto" style="width:81px" disabled>Undo Scan</button></div>
 <div class="dis" style="grid-area:3/2/4/4">
  <label for="val" class="d-block" style="margin-left:53px;height:13px;line-height:12px">Value:</label>
  <div class="d-flex align-items-center" style="padding:0 5px 0 9px"><label for="hex" style="width:28px">Hex</label><input id="hex" type="checkbox" class="tick me-1" disabled><input id="val" class="tbox flex-grow-1" style="height:23px" disabled></div>
  <div class="d-flex" style="margin-top:7px">
   <div style="width:253px">
    <div class="d-flex align-items-center" style="margin-bottom:2px"><label for="st" class="side-lab">Scan Type</label><div class="pick flex-grow-1"><select id="st" disabled><option>Exact Value</option></select><svg width="9" height="6" color="#a0a0a0"><use href="#chev"/></svg></div></div>
    <div class="d-flex align-items-center"><label for="vt" class="side-lab">Value Type</label><div class="pick flex-grow-1"><select id="vt" disabled><option>4 Bytes</option></select><svg width="9" height="6" color="#a0a0a0"><use href="#chev"/></svg></div></div>
    <fieldset class="group"><legend>Memory Scan Options</legend>
     <div class="pick"><select aria-label="Region" disabled><option>All</option></select><svg width="9" height="6" color="#a0a0a0"><use href="#chev"/></svg></div>
     <div class="span-row"><label for="sa">Start</label><input id="sa" class="tbox hexnum flex-grow-1" value="0000000000000000" disabled></div>
     <div class="span-row"><label for="so">Stop</label><input id="so" class="tbox hexnum flex-grow-1" value="00007fffffffffff" disabled></div>
     <div style="margin:0 0 0 -4px">
      <div class="ln"><input type="checkbox" class="tick" id="c1" checked disabled><label for="c1">Writable</label><input type="checkbox" class="tick part ms-auto" id="c2" disabled><label for="c2">Executable</label></div>
      <div class="ln"><input type="checkbox" class="tick" id="c3" disabled><label for="c3">CopyOnWrite</label></div>
      <div class="ln"><input type="checkbox" class="tick" id="c4" disabled><label for="c4">Active memory only</label><button class="flat d-flex align-items-center justify-content-center" style="width:18px;height:18px;margin-left:18px" disabled aria-label="Clear"><svg width="9" height="9" viewBox="0 0 9 9"><path d="M1 1l7 7M8 1L1 8" stroke="#444" stroke-width="2.200"/></svg></button></div>
      <div class="d-flex align-items-center"><div class="ln"><input type="checkbox" class="tick" id="c5" checked disabled><label for="c5">Fast Scan</label></div><input class="tbox text-center mx-1" style="width:35px;height:23px" value="4" aria-label="Alignment value" disabled>
       <div><div class="ln"><input type="radio" name="al" class="tick dot" id="r1" checked disabled><label for="r1">Alignment</label></div><div class="ln"><input type="radio" name="al" class="tick dot" id="r2" disabled><label for="r2">Last Digits</label></div></div></div>
      <div class="ln" style="margin-top:5px"><input type="checkbox" class="tick" id="c6" disabled><label for="c6">Pause the game while scanning</label></div>
     </div>
    </fieldset>
   </div>
   <div style="padding:2px 0 0 6px">
    <div class="ln"><input type="checkbox" class="tick" id="d1" disabled><label for="d1">Lua formula</label></div>
    <div class="ln"><input type="checkbox" class="tick" id="d2" disabled><label for="d2">Not</label></div>
    <div class="ln" style="margin-top:20px"><input type="checkbox" class="tick" id="d3" disabled><label for="d3">Unrandomizer</label></div>
    <div class="ln text-nowrap"><input type="checkbox" class="tick" id="d4" disabled><label for="d4">Enable Speedhack</label></div>
   </div>
  </div>
 </div>
 <div class="d-flex align-items-center" style="grid-column:1/4;padding:2px 1px 0"><button class="cmd">Memory View</button><button class="tool" style="width:26px;height:26px;margin-left:168px" aria-label="Clear list"><svg width="22" height="22" viewBox="0 0 22 22"><circle cx="11" cy="11" r="9.500" fill="none" stroke="#d03030" stroke-width="2"/><path d="M4.500 17.500l13-13" stroke="#d03030" stroke-width="2"/></svg></button><button class="cmd ms-auto">Add Address Manually</button></div>
</div>
<div class="splitter"><i></i></div>
<div class="cheat-list d-flex">
 <table class="flex-grow-1 align-self-start" style="table-layout:fixed"><thead><tr><th style="width:40px">Active</th><th style="width:160px">Description</th><th style="width:116px">Address</th><th style="width:68px">Type</th><th>Value</th></tr></thead></table>
 <div class="sbar" style="width:16px;margin:21px 1px 0 0;color:#bfbfbf"><svg class="mt-2 flip" width="8" height="5"><use href="#chev"/></svg><svg class="mt-auto mb-1" width="8" height="5"><use href="#chev"/></svg></div>
</div>
<footer class="eng-status d-flex justify-content-between align-items-center"><span>Advanced Options</span><span>Table Extras</span></footer>
</section>
</main>

<footer class="taskbar">
<button class="start" aria-label="Start"><svg width="16" height="16" viewBox="0 0 16 16"><path d="M0 2.200L7 1.200V7.600H0ZM8 1.100L16 0V7.600H8ZM0 8.500H7V14.900L0 13.900ZM8 8.500H16V16L8 14.900Z" fill="#fff"/></svg></button>
<div class="findbox d-flex align-items-center ps-2"><svg class="ms-1" style="margin-right:10px" width="17" height="17" color="#222"><use href="#lens"/></svg><input placeholder="Type here to search" aria-label="Search">
 <svg class="ms-auto me-2" width="64" height="38" viewBox="0 0 64 40"><ellipse cx="18" cy="20" rx="17" ry="19" fill="url(#gGold)" stroke="#7d6426"/><path d="M17 8q8-1 8 5l2 4-2 1v4l-5 1 3 6q4 2 5 7-9 4-17 0l2-8-3-8q-1-8 7-12Z" fill="#8c7236" transform="matrix(-1 0 0 1 36 0)"/><path d="M44 2l18 1-3 20-17-1Z" fill="#39478a"/><path d="M46 5l14 1-3 15-12-1Z" fill="#d8cfc4"/><path d="M38 29l6-5 14 1-3 10-18 2Z" fill="#e2dcd2" stroke="#39478a" stroke-width="2"/><ellipse cx="48" cy="30" rx="6" ry="3" fill="#cfc6b8" stroke="#978d7c"/></svg></div>
<button class="tb" style="width:52px" aria-label="Task view"><svg width="17" height="18" viewBox="0 0 17 18"><path d="M.5 0v3h10V0M.5 18v-3h10v3M.5 5.500h10v7H.5ZM14.500 0v4M14.500 7v11" fill="none" stroke="#e8e8e8" stroke-width="1.200"/><path d="M13 4h3v3h-3Z" fill="#e8e8e8"/></svg></button>
<button class="tb run" aria-label="Edge"><svg width="24" height="24"><use href="#edge"/></svg></button>
<button class="tb" aria-label="Store"><svg width="24" height="28" viewBox="0 0 24 28"><path d="M7 8V2h10v6" fill="none" stroke="#28b0f4" stroke-width="2"/><path d="M1 6h22v17q0 4-4 4H5q-4 0-4-4Z" fill="#f4f4f4"/><path d="M7 10h5v5H7Z" fill="#f04e24"/><path d="M13 10h5v5h-5Z" fill="#7cb90a"/><path d="M7 16h5v5H7Z" fill="#00a2e8"/><path d="M13 16h5v5h-5Z" fill="#fbb900"/></svg></button>
<button class="tb run" aria-label="File Explorer"><svg width="22" height="22" viewBox="0 0 22 22"><path d="M0 3V0h9l1 3h12v17H0Z" fill="#e8a81c"/><path d="M0 4h22v16H0Z" fill="#ffd262"/><path d="M4 22v-7q0-2 2-2h10q2 0 2 2v7h-4v-4H8v4Z" fill="#2f86d8"/></svg></button>
<button class="tb" aria-label="Mail"><svg width="24" height="27" viewBox="0 0 24 27"><path d="M0 9L12 0l12 9v4H0Z" fill="#0a58a8"/><path d="M3 9h18v10H3Z" fill="#fff"/><path d="M0 9l12 9 12-9v18H0Z" fill="#1ea0ec"/><path d="M0 27l14-11 10-7v18Z" fill="#3ab8f8"/></svg></button>
<button class="tb run" aria-label="Monitor"><svg width="24" height="22" viewBox="0 0 24 22"><path d="M0 4h13v13H0Z" fill="#aab4b8" stroke="#dde"/><path d="M5 1l18 1-1 14-16-1Z" fill="#e8ecec" stroke="#98a2a8"/><path d="M7 12l3-1 2-6 2 7 2-4 2 4h3" fill="none" stroke="#2080c0" stroke-width="1.300"/><path d="M11 16h6l3 4-4 2-6-2Z" fill="#d8dcdc"/></svg></button>
<button class="tb run" aria-label="Discord"><svg width="26" height="26" viewBox="0 0 26 26"><use href="#discord" width="24" height="24"/><circle cx="18" cy="18" r="7.500" fill="#e8484a"/><text x="12" y="22" font-size="10" fill="#fff">9+</text></svg></button>
<button class="tb run" aria-label="Voicemod"><svg width="22" height="22"><rect width="22" height="22" fill="#000"/><use href="#vm"/></svg></button>
<button class="tb run" aria-label="Notepad"><svg width="22" height="22" viewBox="0 0 22 22"><path d="M1 2h18v19H1Z" fill="#f4f2ea" stroke="#b8b09a"/><path d="M2 0h17v4H2Z" fill="#c8a828"/><path d="M4 0v4M7 0v4M10 0v4M13 0v4M16 0v4" stroke="#444"/><path d="M4 8h12M4 12h10M4 16h12" stroke="#888"/><path d="M22 9L10 16l-2 1 1-2L21 7Z" fill="#d88a2c" stroke="#7a4a14" stroke-width=".6"/></svg></button>
<button class="tb run" aria-label="Steam"><svg width="23" height="23"><use href="#steam"/></svg></button>
<button class="tb run" aria-label="Settings"><svg width="22" height="22" viewBox="0 0 22 22"><circle cx="11" cy="11" r="9.500" fill="none" stroke="#4a9ad8" stroke-width="2.500" stroke-dasharray="2.600 1.600"/><circle cx="11" cy="11" r="7" fill="none" stroke="#3d8ed4" stroke-width="4"/></svg></button>
<button class="tb act" aria-label="Help test"><svg width="24" height="24" color="#1c6a9a"><use href="#ce"/></svg></button>
<div class="tray ms-auto d-flex align-items-center">
 <svg width="25" height="26" viewBox="0 0 25 26"><path d="M1 15q7 3 13-5l8 1q-1 13-11 13Q3 23 1 15Z" fill="url(#gMoon)"/><circle cx="18" cy="7" r="6" fill="#c42b1c"/><text x="16" y="10" font-size="9" fill="#fff">1</text></svg>
 <span style="margin-left:6px">59°F</span><span style="margin-left:7px">Clear</span>
 <svg class="flip" style="margin-left:22px" width="13" height="8"><use href="#chev"/></svg>
 <svg style="margin-left:13px" width="13" height="13" viewBox="0 0 14 14"><g fill="none" stroke="#aab4c0" stroke-width="1.200"><path d="M1 13A12 12 0 0 1 13 1M4.500 13A8.500 8.500 0 0 1 13 4.500M8 13a5 5 0 0 1 5-5"/></g><circle cx="12" cy="12" r="1.500" fill="#fff"/></svg>
 <svg style="margin-left:7px" width="17" height="14" viewBox="0 0 17 14"><path d="M1 5h3l4-4v12L4 9H1ZM10 5q1.500 2 0 4M12 3q3 4 0 8M14 1q5 6 0 12" fill="none" stroke="#fff"/></svg>
 <div class="clock" style="margin-left:3px"><div>1:49 AM</div><div>10/7/2024</div></div>
 <svg class="mt-2" style="margin-left:10px" width="26" height="26" viewBox="0 0 26 26"><path d="M1 1h16v12H9l-3 4v-4H1Z" fill="#fff"/><path d="M3 4.500h12M3 7.500h12M3 10.500h8" stroke="#1a2742"/><circle cx="16" cy="17" r="7.500" fill="#333b48" stroke="#aaa"/><text x="13" y="21" font-size="11" fill="#fff">7</text></svg>
 <i style="margin-left:12px;margin-right:4px;width:1px;height:40px;background:#5a6478"></i>
</div>
</footer>
</body>
</html>
